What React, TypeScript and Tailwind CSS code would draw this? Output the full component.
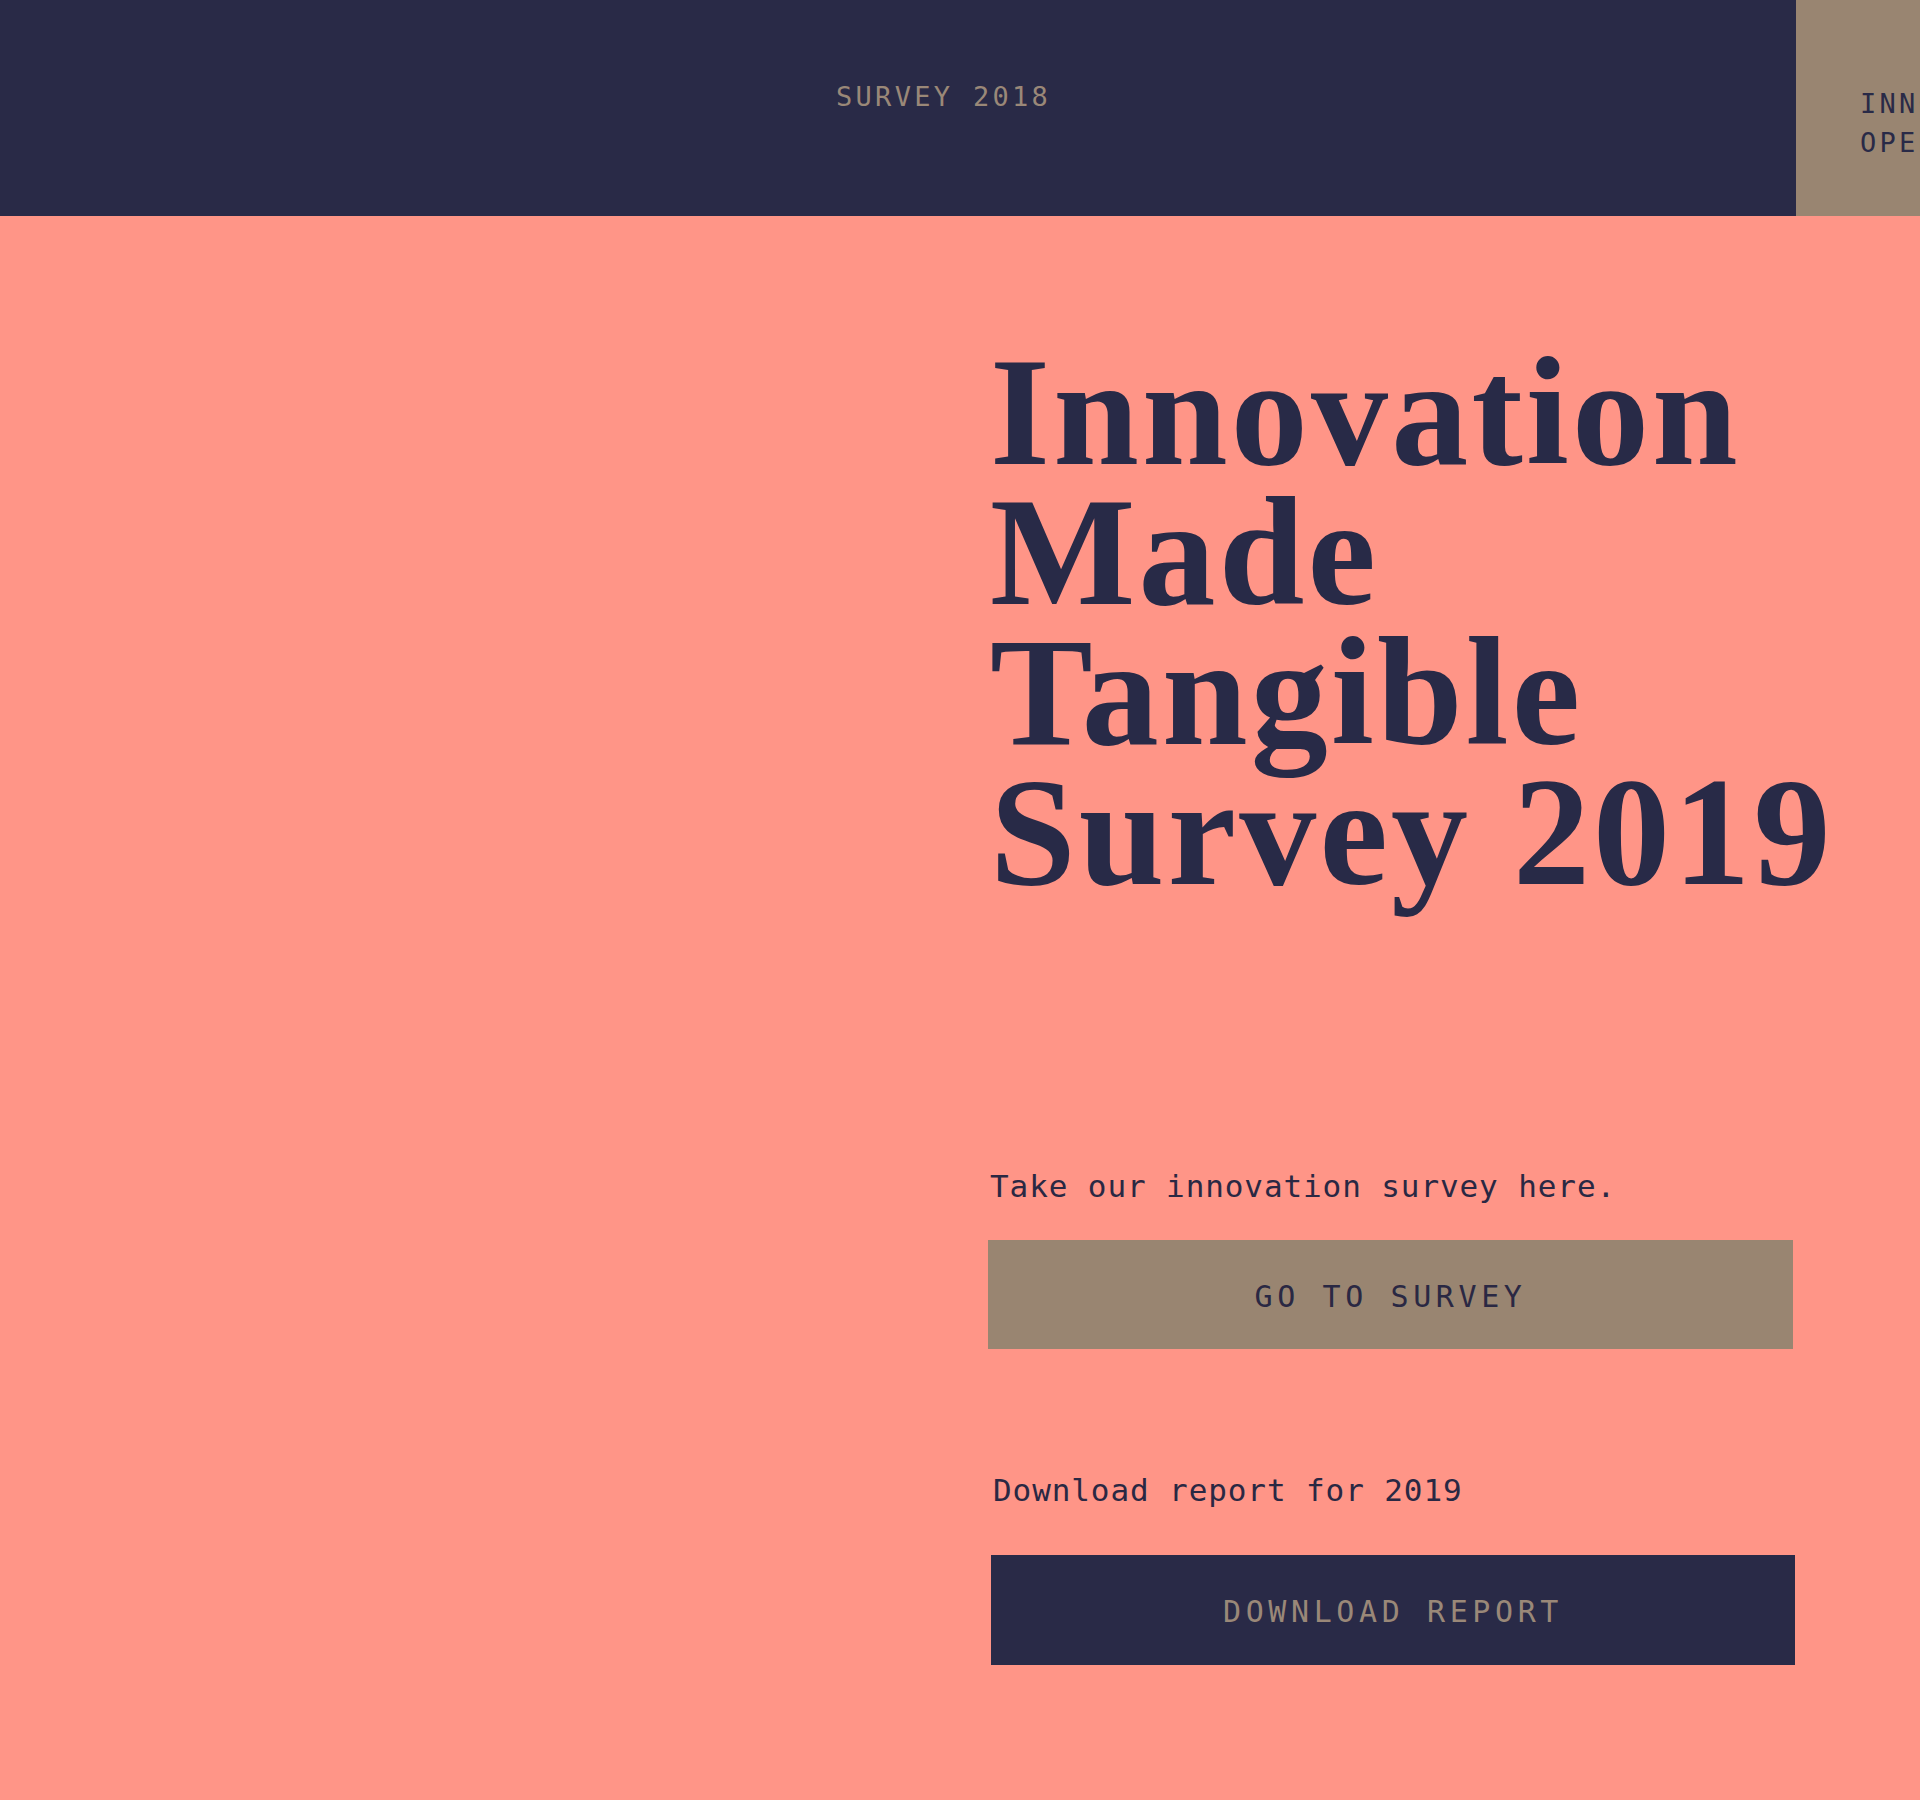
import React from "react";

const mono = "font-['DejaVu_Sans_Mono','Liberation_Mono',monospace]";

const Header = () => {
  return (
    <header className="flex h-[216px] w-full">
      <nav className="flex-1 bg-[#292a47] pl-[836px] pt-[80px]">
        <a className={`${mono} block text-[27px] leading-[34px] tracking-[3.3px] text-[#9a8878] whitespace-nowrap`}>
          SURVEY 2018
        </a>
      </nav>
      <div className="w-[124px] shrink-0 overflow-hidden bg-[#998571] pl-[64px] pt-[84px]">
        <p className={`${mono} text-[27px] leading-[39px] tracking-[3.3px] text-[#292a47] whitespace-nowrap`}>
          INNOVATION
          <br />
          OPEN HOUSE
        </p>
      </div>
    </header>
  );
};

const App = () => {
  return (
    <div className="min-h-screen w-full overflow-hidden bg-[#ff9587]">
      <Header />

      <main className="flex">
        <div className="w-[990px] shrink-0" />
        <section className="w-[806px] pt-[126px] pb-[130px]">
          <h1 className="font-['Liberation_Serif','Times_New_Roman',serif] text-[154px] leading-[140px] font-bold tracking-[3.2px] text-[#282a47] whitespace-nowrap">
            Innovation
            <br />
            Made
            <br />
            Tangible
            <br />
            Survey 2019
          </h1>

          <div className="mt-[266px]">
            <p className={`${mono} text-[31px] leading-[36px] tracking-[0.9px] text-[#2a2843]`}>
              Take our innovation survey here.
            </p>
            <button
              className={`${mono} mt-[36px] flex h-[109px] w-[805px] -ml-[2px] items-center justify-center bg-[#998571] pt-[4px] text-[30px] tracking-[4.6px] text-[#2a2843]`}
            >
              GO TO SURVEY
            </button>
          </div>

          <div className="mt-[123px] ml-[1px]">
            <p className={`${mono} ml-[2px] text-[31px] leading-[36px] tracking-[0.9px] text-[#2a2843]`}>
              Download report for 2019
            </p>
            <button
              className={`${mono} mt-[47px] flex h-[110px] w-[804px] items-center justify-center bg-[#292a47] pt-[2px] text-[30px] tracking-[4.6px] text-[#9a8878]`}
            >
              DOWNLOAD REPORT
            </button>
          </div>
        </section>
      </main>
    </div>
  );
};

export default App;
